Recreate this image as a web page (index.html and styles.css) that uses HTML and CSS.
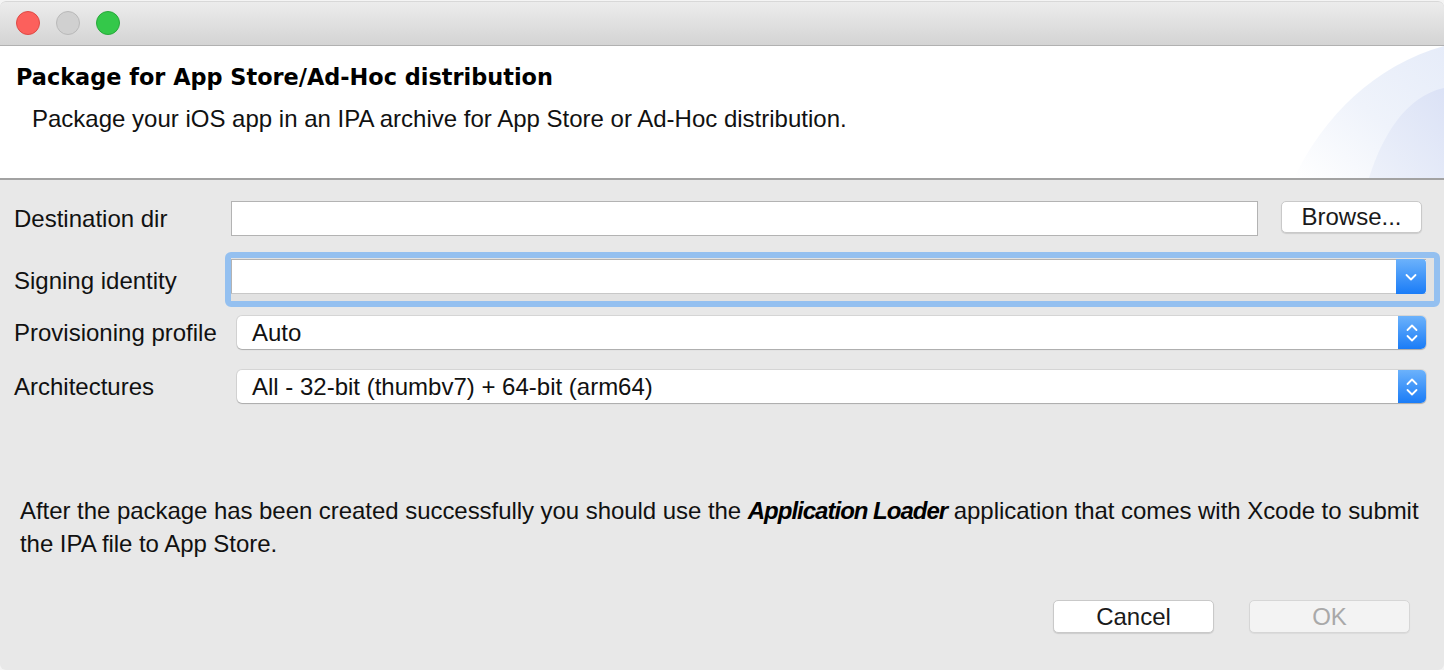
FILE: index.html
```html
<!DOCTYPE html>
<html>
<head>
<meta charset="utf-8">
<link rel="stylesheet" href="styles.css">
</head>
<body>
<div class="window">
  <div class="titlebar">
    <span class="light light-red"></span>
    <span class="light light-gray"></span>
    <span class="light light-green"></span>
  </div>
  <div class="header">
    <h1 class="header-title">Package for App Store/Ad-Hoc distribution</h1>
    <p class="header-desc">Package your iOS app in an IPA archive for App Store or Ad-Hoc distribution.</p>
    <svg class="header-deco" width="150" height="132" viewBox="0 0 150 132" preserveAspectRatio="none">
      <defs>
        <linearGradient id="g1" x1="0" y1="1" x2="1" y2="0">
          <stop offset="0" stop-color="#ffffff"/>
          <stop offset="0.5" stop-color="#eff3fb"/>
          <stop offset="1" stop-color="#e6ecf9"/>
        </linearGradient>
        <linearGradient id="g2" x1="0" y1="1" x2="1" y2="0">
          <stop offset="0" stop-color="#edf1fa"/>
          <stop offset="1" stop-color="#dbe2f6"/>
        </linearGradient>
      </defs>
      <path d="M0 132 C 30 70, 80 20, 150 0 L150 132 Z" fill="url(#g1)"/>
      <path d="M75 132 C 88 90, 112 50, 150 42 L150 132 Z" fill="url(#g2)"/>
    </svg>
  </div>
  <div class="content">
    <div class="form">
      <div class="row row-dest">
        <label class="row-label">Destination dir</label>
        <div class="row-field">
          <div class="textbox"></div>
          <button class="btn btn-browse">Browse...</button>
        </div>
      </div>
      <div class="row row-sign">
        <label class="row-label">Signing identity</label>
        <div class="row-field">
          <div class="focus-ring">
            <div class="combo">
              <div class="combo-text"></div>
              <div class="combo-arrow">
                <svg width="14" height="10" viewBox="0 0 14 10"><path d="M2.5 3 L7 7.5 L11.5 3" fill="none" stroke="#fff" stroke-width="1.8" stroke-linecap="round" stroke-linejoin="round"/></svg>
              </div>
            </div>
          </div>
        </div>
      </div>
      <div class="row row-prov">
        <label class="row-label">Provisioning profile</label>
        <div class="row-field">
          <div class="select">
            <span class="select-text">Auto</span>
            <div class="select-arrow">
              <svg width="14" height="24" viewBox="0 0 14 24"><path d="M2.5 9 L7 4.5 L11.5 9 M2.5 15 L7 19.5 L11.5 15" fill="none" stroke="#fff" stroke-width="1.8" stroke-linecap="round" stroke-linejoin="round"/></svg>
            </div>
          </div>
        </div>
      </div>
      <div class="row row-arch">
        <label class="row-label">Architectures</label>
        <div class="row-field">
          <div class="select">
            <span class="select-text">All - 32-bit (thumbv7) + 64-bit (arm64)</span>
            <div class="select-arrow">
              <svg width="14" height="24" viewBox="0 0 14 24"><path d="M2.5 9 L7 4.5 L11.5 9 M2.5 15 L7 19.5 L11.5 15" fill="none" stroke="#fff" stroke-width="1.8" stroke-linecap="round" stroke-linejoin="round"/></svg>
            </div>
          </div>
        </div>
      </div>
    </div>
    <p class="note">After the package has been created successfully you should use the <b><i>Application Loader</i></b> application that comes with Xcode to submit the IPA file to App Store.</p>
    <div class="actions">
      <button class="btn btn-action">Cancel</button>
      <button class="btn btn-action btn-disabled">OK</button>
    </div>
  </div>
</div>
</body>
</html>
```

FILE: styles.css
```css
* { box-sizing: border-box; }
html, body {
  margin: 0;
  padding: 0;
  width: 1444px;
  height: 670px;
  overflow: hidden;
  background: #f4f4f4;
  font-family: "Liberation Sans", Arial, sans-serif;
  color: #1a1a1a;
}
.window {
  margin-top: 1px;
  width: 1444px;
  height: 669px;
  display: flex;
  flex-direction: column;
  background: #e8e8e8;
  border-radius: 6px 6px 6px 6px;
  overflow: hidden;
}
.titlebar {
  height: 45px;
  flex: 0 0 45px;
  display: flex;
  align-items: center;
  gap: 16px;
  padding: 0 0 1px 16px;
  background: linear-gradient(#ececec, #d4d4d4);
  border-top: 1px solid #d8d8d8;
  border-bottom: 1px solid #b1b1b1;
  border-radius: 6px 6px 0 0;
}
.light {
  width: 24px;
  height: 24px;
  border-radius: 50%;
  display: block;
}
.light-red { background: #fc605c; border: 1px solid #de4a45; }
.light-gray { background: #d0d0d0; border: 1px solid #b9b9b9; }
.light-green { background: #34c84a; border: 1px solid #28a83b; }

.header {
  position: relative;
  height: 134px;
  flex: 0 0 134px;
  background: #fff;
  border-bottom: 2px solid #a2a2a2;
  padding: 17px 0 0 16px;
}
.header-title {
  margin: 0;
  font-family: "DejaVu Sans", sans-serif;
  font-weight: bold;
  font-size: 22.4px;
  line-height: 28px;
  color: #000;
}
.header-desc {
  margin: 14px 0 0 16px;
  font-size: 24px;
  line-height: 28px;
  color: #111;
}
.header-deco {
  position: absolute;
  right: 0;
  top: 0;
}

.content {
  flex: 1;
  display: flex;
  flex-direction: column;
}
.form {
  display: flex;
  flex-direction: column;
  padding: 21px 0 0 14px;
}
.row {
  display: flex;
  align-items: center;
}
.row-dest { height: 35px; }
.row-sign { height: 55px; margin-top: 16px; }
.row-prov { height: 33px; margin-top: 9px; }
.row-arch { height: 33px; margin-top: 21px; }
.row-label {
  width: 211px;
  flex: 0 0 211px;
  font-size: 24px;
  line-height: 28px;
  color: #111;
}
.row-sign .row-label { padding-top: 3px; }
.row-field {
  flex: 1;
  display: flex;
  align-items: center;
  height: 100%;
}
.textbox {
  margin-left: 6px;
  width: 1027px;
  height: 35px;
  background: #fff;
  border: 1px solid #b3b3b3;
}
.btn {
  font-family: "Liberation Sans", Arial, sans-serif;
  font-size: 24px;
  line-height: 28px;
  color: #1a1a1a;
  background: #fff;
  border: 1px solid #c9c9c9;
  border-radius: 5px;
  box-shadow: 0 1px 1px rgba(0,0,0,0.12);
  padding: 0;
}
.btn-browse {
  margin-left: 23px;
  width: 141px;
  height: 32px;
  align-self: flex-start;
}
.focus-ring {
  width: 1215px;
  height: 55px;
  border: 6px solid #94c0f0;
  border-radius: 6px;
  padding: 1px 8px 0 0;
  background: #e2e2e2;
}
.combo {
  display: flex;
  height: 35px;
  background: #fff;
  border-top: 1px solid #b3b3b3;
  border-left: 1px solid #b3b3b3;
  border-bottom: 1px solid #c8c8c8;
}
.combo-text { flex: 1; }
.combo-arrow {
  width: 30px;
  margin: -1px 0 -1px 0;
  display: flex;
  align-items: center;
  justify-content: center;
  background: linear-gradient(#6cb2fb, #1a7cf7);
  border-radius: 0 4px 4px 0;
}
.select {
  margin-left: 12px;
  width: 1189px;
  height: 33px;
  display: flex;
  align-items: center;
  background: #fff;
  border-radius: 5px;
  box-shadow: 0 0 0 1px rgba(0,0,0,0.08), 0 1px 1px rgba(0,0,0,0.2);
}
.select-text {
  flex: 1;
  padding-left: 15px;
  font-size: 24px;
  line-height: 28px;
  color: #111;
}
.select-arrow {
  width: 28px;
  height: 33px;
  display: flex;
  align-items: center;
  justify-content: center;
  background: linear-gradient(#6cb2fb, #1a7cf7);
  border-radius: 0 5px 5px 0;
}
.note {
  margin: 91px 0 0 20px;
  width: 1420px;
  font-size: 24px;
  line-height: 33px;
  letter-spacing: -0.05px;
  color: #111;
}
.note b {
  color: #000;
  letter-spacing: -1px;
}
.actions {
  display: flex;
  justify-content: flex-end;
  gap: 35px;
  padding: 0 34px 0 0;
  margin-top: 40px;
}
.btn-action {
  width: 161px;
  height: 33px;
}
.btn-disabled {
  background: #f3f3f3;
  color: #a9a9a9;
  border-color: #d6d6d6;
  box-shadow: 0 1px 1px rgba(0,0,0,0.06);
}
```
